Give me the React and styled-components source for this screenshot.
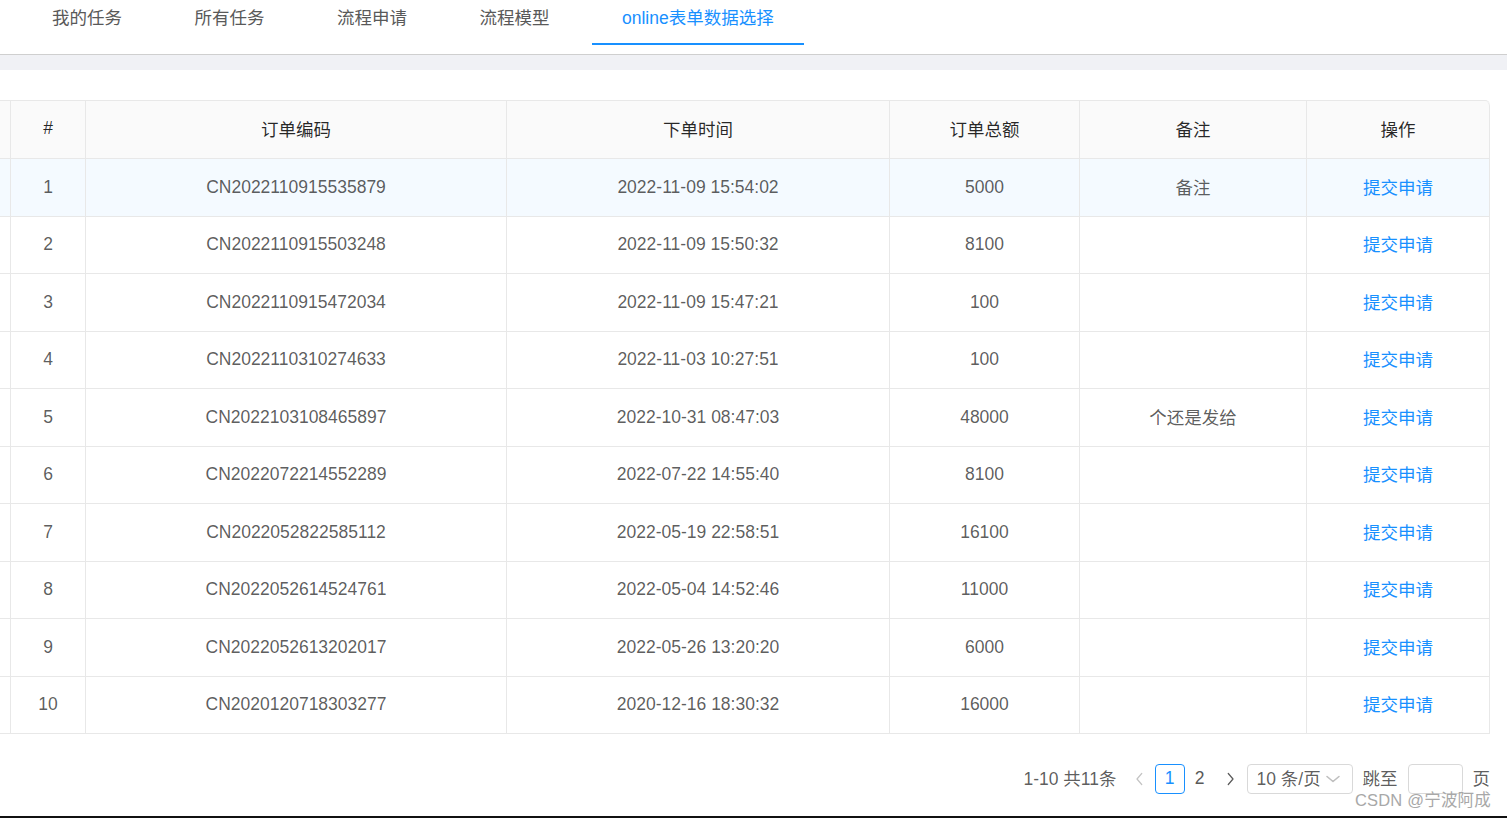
import React from "react";
import styled, { createGlobalStyle } from "styled-components";

const Global = createGlobalStyle`
  html, body { margin: 0; padding: 0; background: #fff; }
  body {
    font-family: "Liberation Sans", "Noto Sans CJK SC", sans-serif;
    font-size: 17.5px;
    color: rgba(0,0,0,0.65);
    overflow: hidden;
  }
  * { box-sizing: border-box; }
`;

const Page = styled.div`
  width: 1507px;
  height: 818px;
  display: flex;
  flex-direction: column;
  position: relative;
`;

const TabBar = styled.div`
  height: 55px;
  border-bottom: 1px solid #cfcfcf;
  display: flex;
  align-items: flex-start;
  padding-left: 22px;
`;

const Tab = styled.div`
  height: 45px;
  padding: 0 30px;
  margin-right: 12.5px;
  line-height: 36px;
  white-space: nowrap;
  color: ${(p) => (p.$active ? "#1890ff" : "#595959")};
  border-bottom: 2px solid ${(p) => (p.$active ? "#1890ff" : "transparent")};
`;

const GrayBand = styled.div`
  height: 15px;
  background: #f0f1f5;
`;

const Content = styled.div`
  padding-top: 30px;
  padding-right: 17px;
`;

const Table = styled.table`
  width: 1490px;
  border-collapse: separate;
  border-spacing: 0;
  table-layout: fixed;
  border-top: 1px solid #e8e8e8;
  border-top-right-radius: 5px;
  overflow: hidden;
`;

const Th = styled.th`
  height: 58px;
  background: #fafafa;
  font-weight: normal;
  color: rgba(0,0,0,0.85);
  text-align: center;
  border-right: 1px solid #e8e8e8;
  border-bottom: 1px solid #e8e8e8;
  padding: 0 0 3px;
  &:last-child { border-top-right-radius: 5px; }
`;

const Tr = styled.tr`
  background: ${(p) => (p.$highlight ? "#f4faff" : "#fff")};
`;

const Td = styled.td`
  height: 57.5px;
  text-align: center;
  border-right: 1px solid #e8e8e8;
  border-bottom: 1px solid #e8e8e8;
  padding: 0;
  white-space: nowrap;
`;

const CjkText = styled.span`
  position: relative;
  top: -1px;
  color: ${(p) => (p.$link ? "#1890ff" : "inherit")};
  cursor: ${(p) => (p.$link ? "pointer" : "default")};
`;

const Pager = styled.div`
  margin-top: 30px;
  height: 30px;
  display: flex;
  align-items: center;
  justify-content: flex-end;
  color: rgba(0,0,0,0.65);
  line-height: 26px;
`;

const Total = styled.span`
  margin-right: 8px;
`;

const NavBtn = styled.div`
  width: 30px;
  height: 30px;
  display: flex;
  align-items: center;
  justify-content: center;
  color: ${(p) => (p.$disabled ? "#c4c4c4" : "#595959")};
`;

const PageItem = styled.div`
  width: 30px;
  height: 30px;
  line-height: 26px;
  text-align: center;
  border: 1px solid ${(p) => (p.$active ? "#1890ff" : "transparent")};
  border-radius: 4px;
  color: ${(p) => (p.$active ? "#1890ff" : "#595959")};
`;

const Select = styled.div`
  margin-left: 2px;
  width: 106px;
  height: 30px;
  border: 1px solid #d9d9d9;
  border-radius: 4px;
  display: flex;
  align-items: center;
  padding-left: 9px;
  gap: 5px;
  white-space: nowrap;
`;

const JumpLabel = styled.span`
  margin-left: 10px;
  white-space: nowrap;
`;

const JumpInput = styled.div`
  margin: 0 10px;
  width: 55px;
  height: 30px;
  border: 1px solid #d9d9d9;
  border-radius: 4px;
`;

const Watermark = styled.div`
  position: absolute;
  right: 16px;
  top: 787px;
  font-size: 16.5px;
  color: #a8a8a8;
  letter-spacing: 0.2px;
`;

const BottomBar = styled.div`
  margin-top: auto;
  height: 2px;
  background: #111;
`;

const Chevron = ({ dir, color = "currentColor", w = 12, h = 12 }) => {
  const d =
    dir === "left"
      ? "M9 1.5 L3.5 7 L9 12.5"
      : dir === "right"
      ? "M5 1.5 L10.5 7 L5 12.5"
      : "M1 4 L7 10 L13 4";
  return (
    <svg width={w} height={h} viewBox="0 0 14 14" fill="none" preserveAspectRatio="none">
      <path d={d} stroke={color} strokeWidth="1.5" strokeLinecap="round" strokeLinejoin="round" />
    </svg>
  );
};

const rows = [
  ["1", "CN2022110915535879", "2022-11-09 15:54:02", "5000", "备注"],
  ["2", "CN2022110915503248", "2022-11-09 15:50:32", "8100", ""],
  ["3", "CN2022110915472034", "2022-11-09 15:47:21", "100", ""],
  ["4", "CN2022110310274633", "2022-11-03 10:27:51", "100", ""],
  ["5", "CN2022103108465897", "2022-10-31 08:47:03", "48000", "个还是发给"],
  ["6", "CN2022072214552289", "2022-07-22 14:55:40", "8100", ""],
  ["7", "CN2022052822585112", "2022-05-19 22:58:51", "16100", ""],
  ["8", "CN2022052614524761", "2022-05-04 14:52:46", "11000", ""],
  ["9", "CN2022052613202017", "2022-05-26 13:20:20", "6000", ""],
  ["10", "CN2020120718303277", "2020-12-16 18:30:32", "16000", ""],
];

const widths = [11, 75, 421, 383, 190, 227, 183];

export default function App() {
  return (
    <Page>
      <Global />
      <TabBar>
        <Tab>我的任务</Tab>
        <Tab>所有任务</Tab>
        <Tab>流程申请</Tab>
        <Tab>流程模型</Tab>
        <Tab $active>online表单数据选择</Tab>
      </TabBar>
      <GrayBand />
      <Content>
        <Table>
          <colgroup>
            {widths.map((w, i) => (
              <col key={i} style={{ width: w }} />
            ))}
          </colgroup>
          <thead>
            <tr>
              <Th />
              <Th>#</Th>
              <Th>订单编码</Th>
              <Th>下单时间</Th>
              <Th>订单总额</Th>
              <Th>备注</Th>
              <Th>操作</Th>
            </tr>
          </thead>
          <tbody>
            {rows.map((r, i) => (
              <Tr key={i} $highlight={i === 0}>
                <Td />
                <Td>{r[0]}</Td>
                <Td>{r[1]}</Td>
                <Td>{r[2]}</Td>
                <Td>{r[3]}</Td>
                <Td>{r[4] && <CjkText>{r[4]}</CjkText>}</Td>
                <Td>
                  <CjkText $link>提交申请</CjkText>
                </Td>
              </Tr>
            ))}
          </tbody>
        </Table>
        <Pager>
          <Total>1-10 共11条</Total>
          <NavBtn $disabled>
            <Chevron dir="left" w={12} h={14} />
          </NavBtn>
          <PageItem $active>1</PageItem>
          <PageItem>2</PageItem>
          <NavBtn>
            <Chevron dir="right" w={12} h={14} />
          </NavBtn>
          <Select>
            <span>10 条/页</span>
            <Chevron dir="down" color="#bfbfbf" w={14} h={12} />
          </Select>
          <JumpLabel>跳至</JumpLabel>
          <JumpInput />
          <span>页</span>
        </Pager>
      </Content>
      <Watermark>CSDN @宁波阿成</Watermark>
      <BottomBar />
    </Page>
  );
}
